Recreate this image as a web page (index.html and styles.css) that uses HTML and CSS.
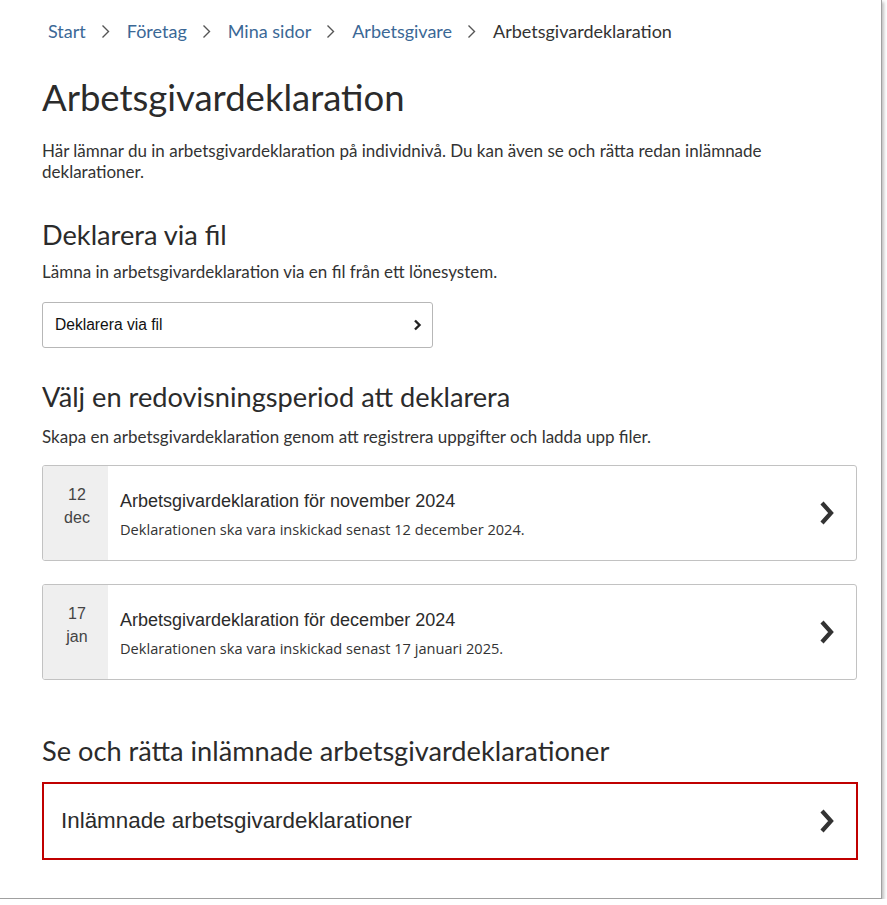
FILE: index.html
```html
<!DOCTYPE html>
<html lang="sv">
<head>
    <meta charset="UTF-8">
    <meta name="viewport" content="width=device-width, initial-scale=1.0">
    <title>Arbetsgivardeklaration</title>
    <link rel="stylesheet" href="styles.css">
</head>
<body>
<div class="page">

    <!-- Breadcrumb -->
    <nav class="breadcrumb">
        <a href="#">Start</a>
        <span class="crumb-sep"><svg width="9" height="15" viewBox="0 0 9 15"><polyline points="1.5,1.5 7.5,7.5 1.5,13.5" fill="none" stroke="#555" stroke-width="1.4"/></svg></span>
        <a href="#">Företag</a>
        <span class="crumb-sep"><svg width="9" height="15" viewBox="0 0 9 15"><polyline points="1.5,1.5 7.5,7.5 1.5,13.5" fill="none" stroke="#555" stroke-width="1.4"/></svg></span>
        <a href="#">Mina sidor</a>
        <span class="crumb-sep"><svg width="9" height="15" viewBox="0 0 9 15"><polyline points="1.5,1.5 7.5,7.5 1.5,13.5" fill="none" stroke="#555" stroke-width="1.4"/></svg></span>
        <a href="#">Arbetsgivare</a>
        <span class="crumb-sep"><svg width="9" height="15" viewBox="0 0 9 15"><polyline points="1.5,1.5 7.5,7.5 1.5,13.5" fill="none" stroke="#555" stroke-width="1.4"/></svg></span>
        <span class="crumb-current">Arbetsgivardeklaration</span>
    </nav>

    <h1>Arbetsgivardeklaration</h1>
    <p class="lead">Här lämnar du in arbetsgivardeklaration på individnivå. Du kan även se och rätta redan inlämnade deklarationer.</p>

    <!-- Deklarera via fil -->
    <h2>Deklarera via fil</h2>
    <p>Lämna in arbetsgivardeklaration via en fil från ett lönesystem.</p>
    <a href="#" class="file-btn">
        <span>Deklarera via fil</span>
        <svg width="9" height="12" viewBox="0 0 9 12"><polyline points="2,1.5 6.5,6 2,10.5" fill="none" stroke="#222" stroke-width="2.4"/></svg>
    </a>

    <!-- Perioder -->
    <h2 class="period-title">Välj en redovisningsperiod att deklarera</h2>
    <p>Skapa en arbetsgivardeklaration genom att registrera uppgifter och ladda upp filer.</p>

    <div class="period-list">
        <a href="#" class="period-card">
            <div class="period-date">
                <span>12</span>
                <span>dec</span>
            </div>
            <div class="period-info">
                <div class="period-name">Arbetsgivardeklaration för november 2024</div>
                <div class="period-desc">Deklarationen ska vara inskickad senast 12 december 2024.</div>
            </div>
            <svg class="chevron" width="16" height="26" viewBox="0 0 16 26"><polyline points="3,3 12,13 3,23" fill="none" stroke="#333" stroke-width="4.2"/></svg>
        </a>
        <a href="#" class="period-card">
            <div class="period-date">
                <span>17</span>
                <span>jan</span>
            </div>
            <div class="period-info">
                <div class="period-name">Arbetsgivardeklaration för december 2024</div>
                <div class="period-desc">Deklarationen ska vara inskickad senast 17 januari 2025.</div>
            </div>
            <svg class="chevron" width="16" height="26" viewBox="0 0 16 26"><polyline points="3,3 12,13 3,23" fill="none" stroke="#333" stroke-width="4.2"/></svg>
        </a>
    </div>

    <!-- Inlämnade -->
    <h2 class="submitted-title">Se och rätta inlämnade arbetsgivardeklarationer</h2>
    <a href="#" class="submitted-link">
        <span>Inlämnade arbetsgivardeklarationer</span>
        <svg class="chevron" width="16" height="26" viewBox="0 0 16 26"><polyline points="3,3 12,13 3,23" fill="none" stroke="#333" stroke-width="4.2"/></svg>
    </a>

</div>
</body>
</html>
```

FILE: styles.css
```css
/* Global */
body {
    margin: 0;
    background-color: #fff;
    font-family: Lato, "Open Sans", sans-serif;
    color: #333;
}

a {
    text-decoration: none;
    color: inherit;
}

.page {
    width: 882px;
    height: 899px;
    box-sizing: border-box;
    padding: 19px 24px 0 42px;
    background: #fff;
    border-right: 1px solid #a0a0a0;
    border-bottom: 1px solid #a0a0a0;
    box-shadow: 2px 2px 3px rgba(0, 0, 0, 0.25);
    overflow: hidden;
}

/* Breadcrumb */
.breadcrumb {
    display: flex;
    align-items: center;
    font-size: 18px;
    height: 24px;
    padding-left: 6px;
}

.breadcrumb a {
    color: #3b6896;
}

.crumb-sep {
    display: flex;
    margin: 0 17px 0 15px;
}

.crumb-current {
    color: #333;
}

/* Headings */
h1 {
    font-size: 36.5px;
    font-weight: 400;
    margin: 32px 0 0;
    line-height: 44px;
    color: #2b2b2b;
}

h2 {
    font-size: 27.2px;
    font-weight: 400;
    margin: 0;
    line-height: 32px;
    color: #2b2b2b;
}

p {
    font-size: 17px;
    line-height: 21px;
    margin: 0;
}

.lead {
    margin: 21px 0 37px;
}

h2 + p {
    margin-top: 10px;
}

/* File button */
.file-btn {
    display: flex;
    justify-content: space-between;
    align-items: center;
    width: 391px;
    height: 46px;
    box-sizing: border-box;
    margin-top: 20px;
    padding: 0 10px 0 12px;
    border: 1px solid #b7b7b7;
    border-radius: 3px;
    font-family: "Liberation Sans", Arial, sans-serif;
    font-size: 15.6px;
    color: #111;
}

.period-title {
    margin-top: 33px;
}

h2.period-title + p {
    margin-top: 13px;
}

/* Period cards */
.period-list {
    display: flex;
    flex-direction: column;
    gap: 23px;
    margin-top: 18px;
}

.period-card {
    display: flex;
    align-items: stretch;
    height: 96px;
    box-sizing: border-box;
    border: 1px solid #c2c2c2;
    border-radius: 3px;
    overflow: hidden;
}

.period-date {
    width: 65px;
    flex-shrink: 0;
    background-color: #efefef;
    display: flex;
    flex-direction: column;
    align-items: center;
    padding: 17px 0 0 3px;
    box-sizing: border-box;
    font-family: "Liberation Sans", Arial, sans-serif;
    font-size: 16px;
    line-height: 23px;
    color: #444;
}

.period-info {
    flex-grow: 1;
    padding: 24px 0 0 12px;
}

.period-name {
    font-family: "Liberation Sans", Arial, sans-serif;
    font-size: 18px;
    line-height: 22px;
    color: #2b2b2b;
}

.period-desc {
    font-family: "Open Sans", sans-serif;
    font-size: 14.6px;
    line-height: 20px;
    margin-top: 7px;
    color: #333;
}

.chevron {
    align-self: center;
    margin-right: 21px;
    flex-shrink: 0;
}

/* Submitted */
.submitted-title {
    margin-top: 55px;
}

.submitted-link {
    display: flex;
    justify-content: space-between;
    align-items: center;
    height: 78px;
    box-sizing: border-box;
    margin-top: 15px;
    margin-right: -1px;
    padding-left: 17px;
    border: 2px solid #c00000;
    font-family: "Liberation Sans", Arial, sans-serif;
    font-size: 22.4px;
    color: #2b2b2b;
}

.submitted-link .chevron {
    margin-right: 21px;
}
```
